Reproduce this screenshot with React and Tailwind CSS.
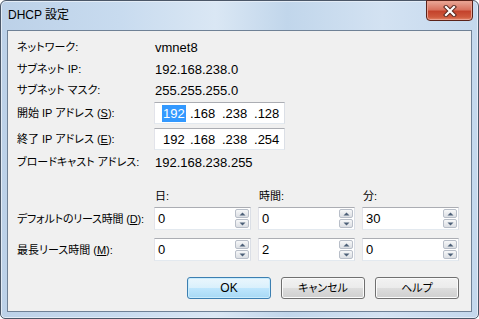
import React from "react";

const FONT = "[font-family:'Liberation_Sans','Noto_Sans_CJK_JP',sans-serif] [font-feature-settings:'palt']";

function SpinBtn({ up }) {
  return (
    <div className="flex-1 flex items-center justify-center rounded-[2px] border border-[#b8bec8] bg-[linear-gradient(180deg,#f7f8f9_0%,#e9ebee_50%,#dcdfe4_100%)]">
      <svg width="7" height="4" viewBox="0 0 7 4">
        {up ? (
          <path d="M0.5 3.5 L3.5 0.5 L6.5 3.5 Z" fill="#4d6078" />
        ) : (
          <path d="M0.5 0.5 L3.5 3.5 L6.5 0.5 Z" fill="#4d6078" />
        )}
      </svg>
    </div>
  );
}

function Spin({ value }) {
  return (
    <div className="w-[97px] h-[23px] flex bg-white border border-t-[#abadb3] border-l-[#e2e3ea] border-r-[#dbdfe6] border-b-[#e3e9ef]">
      <div className="flex-1 pl-[3px] pt-[3px] text-[13px] leading-[15px] text-black">{value}</div>
      <div className="w-[15px] flex flex-col gap-[1px] py-[1px] pr-[1px]">
        <SpinBtn up />
        <SpinBtn />
      </div>
    </div>
  );
}

function IpBox({ hl, last }) {
  return (
    <div className="w-[131px] h-[22px] flex items-center bg-white border border-t-[#abadb3] border-l-[#e2e3ea] border-r-[#dbdfe6] border-b-[#e3e9ef] text-[13px] leading-[15px] text-black">
      <span className="inline-block w-[35px] pl-[8px]">
        <span className={hl ? "bg-[#3399ff] text-white px-[1px] -mx-[1px] py-[1px]" : ""}>192</span>
      </span>
      <span className="inline-block w-[32px]">.168</span>
      <span className="inline-block w-[32px]">.238</span>
      <span className="inline-block w-[30px]">.{last}</span>
    </div>
  );
}

function Label({ children, tight }) {
  return (
    <div className={"w-[137px] shrink-0 text-[11px] leading-[16px] text-black whitespace-nowrap " + (tight ? "tracking-[-0.2px]" : "")}>
      {children}
    </div>
  );
}

function Btn({ children, primary }) {
  return (
    <div
      className={
        "w-[84px] h-[22px] rounded-[3px] border flex items-center justify-center text-[11px] leading-[16px] text-black " +
        (primary
          ? "border-[#3c7fb1] bg-[linear-gradient(180deg,#eaf6fd_0%,#d9f0fc_50%,#bee6fd_50%,#a7d9f5_100%)] shadow-[inset_0_0_0_1px_#c9ecfd]"
          : "border-[#707070] bg-[linear-gradient(180deg,#f2f2f2_0%,#ebebeb_50%,#dddddd_50%,#cfcfcf_100%)] shadow-[inset_0_0_0_1px_#fbfbfb]")
      }
    >
      {children}
    </div>
  );
}

export default function App() {
  return (
    <div className={"w-[479px] h-[319px] bg-white " + FONT}>
      <div className="w-full h-full rounded-t-[6px] rounded-b-[5px] border border-[#4b5768] flex flex-col bg-[linear-gradient(90deg,#bcd1e8_0%,#c8dbef_25%,#dae7f4_45%,#c1d6eb_60%,#d3e2f2_80%,#c4d8ed_100%)] shadow-[inset_0_0_0_1px_#e3ecf6]">
        <div className="h-[29px] flex items-start shrink-0">
          <div className="mt-[6px] pl-[7px] text-[12px] leading-[16px] text-black">DHCP 設定</div>
          <div className="ml-auto mr-[5px] -mt-[1px] w-[47px] h-[21px] rounded-b-[4px] border border-[#5a2219] bg-[linear-gradient(180deg,#e9a898_0%,#d9735f_45%,#c4432c_55%,#cf5a3e_85%,#e4876a_100%)] shadow-[inset_0_0_0_1px_#eaa08e] flex items-center justify-center">
            <svg width="14" height="12" viewBox="0 0 14 12">
              <path d="M3 2 L11 10 M11 2 L3 10" stroke="#5a2a22" strokeWidth="4.2" strokeLinecap="square" />
              <path d="M3 2 L11 10 M11 2 L3 10" stroke="#ffffff" strokeWidth="2.2" strokeLinecap="square" />
            </svg>
          </div>
        </div>
        <div className="flex-1 mx-[6px] mb-[6px] border border-[#6f8196] bg-[#f0f0f0] pl-[9px] pt-[5px] flex flex-col">
          <div className="h-[22px] flex items-center">
            <Label>ネットワーク:</Label>
            <div className="pl-[1px] text-[13px] leading-[15px]">vmnet8</div>
          </div>
          <div className="h-[22px] flex items-center">
            <Label>サブネット IP:</Label>
            <div className="pl-[1px] text-[13px] leading-[15px]">192.168.238.0</div>
          </div>
          <div className="h-[20px] flex items-center">
            <Label>サブネット マスク:</Label>
            <div className="pl-[1px] text-[13px] leading-[15px]">255.255.255.0</div>
          </div>
          <div className="mt-[2px] h-[22px] flex items-center">
            <Label>開始 IP アドレス (<span className="underline">S</span>):</Label>
            <IpBox hl last="128" />
          </div>
          <div className="mt-[4px] h-[22px] flex items-center">
            <Label>終了 IP アドレス (<span className="underline">E</span>):</Label>
            <IpBox last="254" />
          </div>
          <div className="h-[24px] flex items-center">
            <Label>ブロードキャスト アドレス:</Label>
            <div className="pl-[1px] text-[13px] leading-[15px]">192.168.238.255</div>
          </div>
          <div className="mt-[14px] h-[16px] flex items-center">
            <div className="w-[137px] shrink-0" />
            <div className="flex gap-[7px] text-[11px] leading-[16px]">
              <div className="w-[97px] pl-[1px]">日:</div>
              <div className="w-[97px] pl-[1px]">時間:</div>
              <div className="w-[97px] pl-[1px]">分:</div>
            </div>
          </div>
          <div className="mt-[3px] flex items-center">
            <Label tight>デフォルトのリース時間 (<span className="underline">D</span>):</Label>
            <div className="flex gap-[7px]">
              <Spin value="0" />
              <Spin value="0" />
              <Spin value="30" />
            </div>
          </div>
          <div className="mt-[8px] flex items-center">
            <Label>最長リース時間 (<span className="underline">M</span>):</Label>
            <div className="flex gap-[7px]">
              <Spin value="0" />
              <Spin value="2" />
              <Spin value="0" />
            </div>
          </div>
          <div className="mt-[16px] flex justify-end gap-[10px] pr-[12px]">
            <Btn primary><span className="text-[12px]">OK</span></Btn>
            <Btn>キャンセル</Btn>
            <Btn>ヘルプ</Btn>
          </div>
        </div>
      </div>
    </div>
  );
}
